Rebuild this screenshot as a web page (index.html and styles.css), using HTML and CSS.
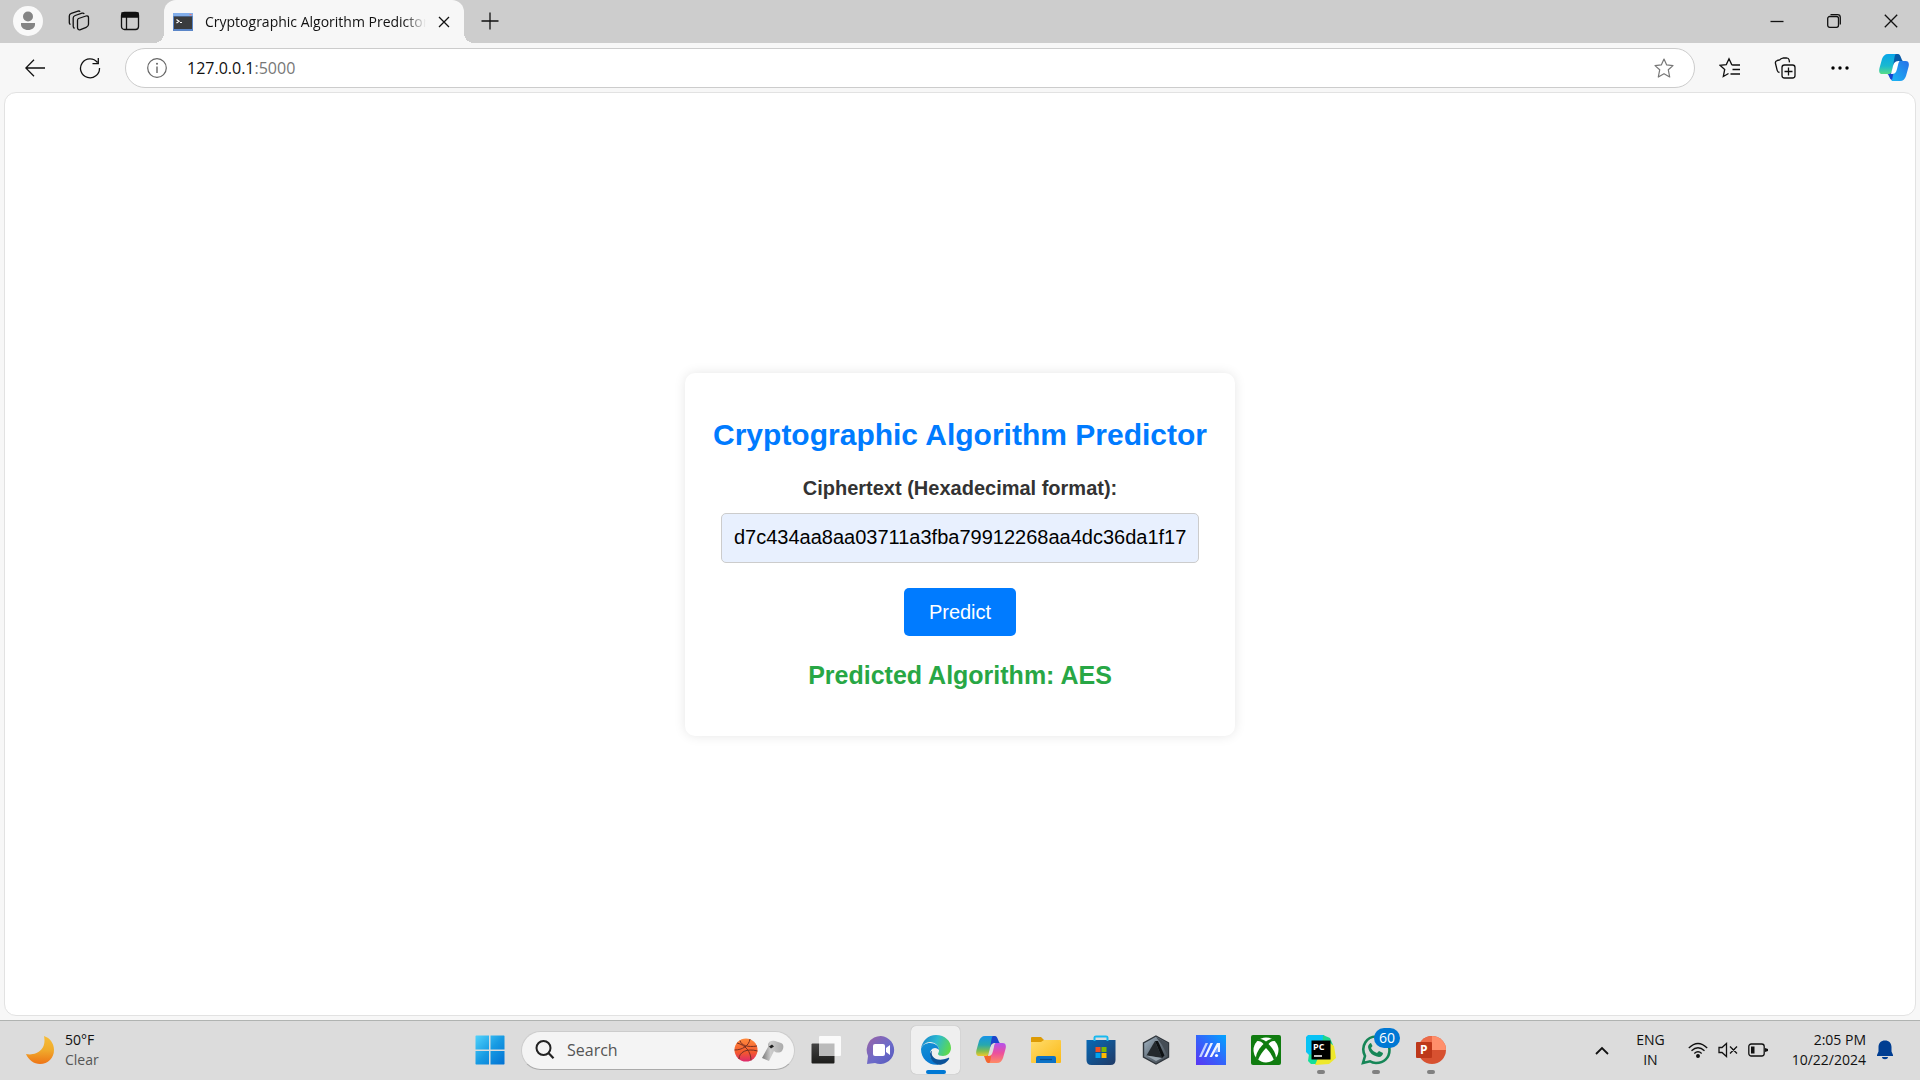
FILE: index.html
```html
<!DOCTYPE html>
<html lang="en">

<head>
    <meta charset="UTF-8">
    <meta name="viewport" content="width=device-width, initial-scale=1.0">
    <title>Cryptographic Algorithm Predictor</title>
    <link rel="stylesheet" href="styles.css">
</head>

<body>
    <header class="browser">
        <div class="tab-bar">
            <button class="icon-btn profile" aria-label="Profile">
                <svg width="30" height="30" viewBox="0 0 30 30"><circle cx="15" cy="15" r="15" fill="#f9f9f9"/><circle cx="15" cy="10.500" r="5" fill="#858585"/><path d="M8 17h14v1.500c0 3-3 5.500-7 5.500s-7-2.500-7-5.500z" fill="#858585"/></svg>
            </button>
            <button class="icon-btn" aria-label="Workspaces">
                <svg class="line" width="22" height="22" viewBox="0 0 22 22"><path d="M10.500 8.500l7.500-2.500c1.600-.5 2.500.3 2.500 1.700v6.500c0 1.500-.8 2.500-2.300 3.100l-5.700 2.300c-1.700.7-3-.2-3-2V10.500c0-1 .3-1.700 1-2z"/><path d="M6.500 18.500l-.7-.7c-.5-.5-.6-1-.6-1.700V8c0-1.400.6-2 2-2.500l6.800-2.300c1-.3 1.800 0 2.200.8"/><path d="M2.500 14.500L1.800 14c-.4-.5-.5-.9-.5-1.500V6c0-1.400.6-2.200 2-2.700L10 1.100c1-.3 1.700 0 2.100.7"/></svg>
            </button>
            <button class="icon-btn" aria-label="Tab actions">
                <svg class="line" width="20" height="20" viewBox="0 0 20 20"><rect x="1.500" y="1.500" width="17" height="17" rx="3"/><path d="M2 2h16v4H2z" fill="#111"/><path d="M6.500 6v12"/></svg>
            </button>
            <div class="tab">
                <svg width="20" height="18" viewBox="0 0 20 18"><path d="M0 0h20v18H0z" fill="#5b86c8"/><path d="M0 0h20v3H0z" fill="#82aeea"/><path d="M1 3.500h18V16H1z" fill="#3a3c3e"/><path d="M16.500 1h2v1.200h-2z" fill="#e77"/><path d="M3.500 6.500L6 8.300l-2.500 1.800M7 9.500h2" fill="none" stroke="#fff" stroke-width="1.200"/></svg>
                <span class="tab-title">Cryptographic Algorithm Predictor</span>
                <button class="tab-close" aria-label="Close tab">
                    <svg class="line" width="12" height="12" viewBox="0 0 12 12"><path d="M1 1l10 10M11 1L1 11"/></svg>
                </button>
            </div>
            <button class="icon-btn new-tab" aria-label="New tab">
                <svg class="line" width="18" height="18" viewBox="0 0 18 18"><path d="M9 .5v17M.5 9h17"/></svg>
            </button>
            <div class="window-btns">
                <button class="window-btn" aria-label="Minimize"><svg class="line" width="14" height="14" viewBox="0 0 14 14"><path d="M.5 7.500h13"/></svg></button>
                <button class="window-btn" aria-label="Restore"><svg class="line" width="14" height="14" viewBox="0 0 14 14"><rect x=".7" y="2.500" width="10.800" height="10.800" rx="2"/><path d="M3.500.7h7c1.800 0 2.800 1 2.800 2.800v7"/></svg></button>
                <button class="window-btn" aria-label="Close"><svg class="line" width="14" height="14" viewBox="0 0 14 14"><path d="M.8.8l12.400 12.400M13.200.8L.8 13.200"/></svg></button>
            </div>
        </div>
        <div class="toolbar">
            <button class="tool-btn" aria-label="Back"><svg class="line" width="20" height="18" viewBox="0 0 20 18"><path d="M9 .8L.8 9 9 17.200M1 9h19"/></svg></button>
            <button class="tool-btn" aria-label="Refresh"><svg class="line" width="22" height="22" viewBox="0 0 22 22"><path d="M18.500 5.500A9.500 9.500 0 1 0 20.500 11M19.300 1v5.700h-5.800"/></svg></button>
            <div class="address">
                <svg width="20" height="20" viewBox="0 0 20 20"><circle cx="10" cy="10" r="9.300" fill="none" stroke="#666" stroke-width="1.200"/><path d="M10 8.500V15" stroke="#666" stroke-width="1.400"/><circle cx="10" cy="5.800" r="1" fill="#666"/></svg>
                <a class="url" href="#">127.0.0.1<span class="port">:5000</span></a>
                <button class="star" aria-label="Add to favorites"><svg width="20" height="20" viewBox="0 0 20 20"><path d="M10 1l2.700 5.900 6.300.7-4.700 4.200 1.400 7.200-5.700-3.300L4.300 19l1.400-7.200L1 7.600l6.300-.7z" fill="none" stroke="#777" stroke-width="1.200" stroke-linejoin="round"/></svg></button>
            </div>
            <div class="tools">
                <button class="tool-btn" aria-label="Favorites"><svg class="line" width="22" height="22" viewBox="0 0 22 22"><path d="M14.300 7.800l-1.600-.2L10 1.700 7.300 7.600 1 8.300 5.700 12.500 4.300 19.500l5.200-3M13 8h8M13.500 12.500H21M11.500 17H21"/></svg></button>
                <button class="tool-btn" aria-label="Collections"><svg class="line" width="22" height="22" viewBox="0 0 22 22"><rect x="8" y="8" width="13" height="13" rx="2.500"/><path d="M14.500 10.500v8M10.500 14.500h8M5.500 15.500c-1.500-.3-2-1-2.300-2.200L1.500 6.500C1.100 5 1.700 4 3.200 3.500l2.500-.6C7 1.200 8 1.300 9.500 1l3-.2c1.500 0 2.300.6 2.600 2l.4 2.500"/></svg></button>
                <button class="tool-btn" aria-label="Settings and more"><svg width="18" height="6" viewBox="0 0 18 6"><circle cx="2" cy="3" r="1.700"/><circle cx="9" cy="3" r="1.700"/><circle cx="16" cy="3" r="1.700"/></svg></button>
                <button class="tool-btn copilot" aria-label="Copilot">
                    <svg width="30" height="28" viewBox="0 0 30 28">
                        <defs>
                            <linearGradient id="cp1" x1="0" y1="0" x2="0" y2="1"><stop offset="0" stop-color="#08a5e9"/><stop offset=".6" stop-color="#1ab9cf"/><stop offset="1" stop-color="#59dd87"/></linearGradient>
                            <linearGradient id="cp2" x1="1" y1="0" x2="0" y2="1"><stop offset="0" stop-color="#2870e8"/><stop offset="1" stop-color="#19b7f4"/></linearGradient>
                        </defs>
                        <path d="M13 21L16 8l8-1c-2-1-2-7-5-7h-8l-3 20z" fill="#075aa8"/>
                        <path d="M8 19c2 1 2 6 5 7h7l3-19-7 1-3 11z" fill="#1745d2"/>
                        <path d="M17 0H9C6 0 4 2 3 5L.5 14c-1 4 0 6 3 6H10c2 0 3-2 3.500-4L15 6c.7-4 1-6 2-6z" fill="url(#cp1)"/>
                        <path d="M12 27h9c3 0 5-2 6-5l2.500-9c1-4 0-6-3-6H20c-2 0-3 2-3.500 4L14 21c-.7 4-1 6-2 6z" fill="url(#cp2)"/>
                        <path d="M21 7c-4 0-6 1-7 5l-2 8c4 0 5-1 6-5l1-4c.5-2 1-4 2-4z" fill="#fff"/>
                    </svg>
                </button>
            </div>
        </div>
    </header>

    <main class="page">
        <div class="container">
            <h1>Cryptographic Algorithm Predictor</h1>
            <form>
                <label for="ciphertext">Ciphertext (Hexadecimal format):</label>
                <input type="text" id="ciphertext" name="ciphertext" value="d7c434aa8aa03711a3fba79912268aa4dc36da1f17">
                <button class="predict" type="button">Predict</button>
            </form>
            <h2>Predicted Algorithm: AES</h2>
        </div>
    </main>

    <footer class="taskbar">
        <div class="weather">
            <svg width="30" height="30" viewBox="0 0 30 30"><defs><linearGradient id="moon" x1="0" y1="0" x2="0" y2="1"><stop offset="0" stop-color="#f6bd37"/><stop offset=".5" stop-color="#f0ab2c"/><stop offset="1" stop-color="#ee7416"/></linearGradient></defs><path d="M19 1c6 2 10 7.500 10 14 0 8-6 14-14 14C9 29 3.500 25 1 19c10 2 21-4 18-18z" fill="url(#moon)"/></svg>
            <div class="two-line">
                <span>50°F</span>
                <span class="muted">Clear</span>
            </div>
        </div>

        <div class="apps">
            <button class="app" aria-label="Start">
                <svg width="30" height="30" viewBox="0 0 30 30"><defs><linearGradient id="win" x1="0" y1="0" x2="1" y2="1"><stop offset="0" stop-color="#51d2fb"/><stop offset=".5" stop-color="#179be3"/><stop offset="1" stop-color="#0271d3"/></linearGradient></defs><path d="M1 .5h13v14H.5V1zM15.500.500H29l.5.5v13.500h-14zM.5 16H14v13.500H1l-.5-.5zM15.500 16h14v13l-.5.5H15.500z" fill="url(#win)"/></svg>
            </button>
            <div class="search">
                <svg width="20" height="20" viewBox="0 0 20 20"><circle cx="8.500" cy="8" r="7" fill="none" stroke="#222" stroke-width="2"/><path d="M13.500 13l5 5.200" stroke="#222" stroke-width="2.200"/></svg>
                <input type="text" aria-label="Search" placeholder="Search">
                <svg width="50" height="26" viewBox="0 0 50 26">
                    <defs>
                        <linearGradient id="ball" x1="0" y1="0" x2="0" y2="1"><stop offset="0" stop-color="#ff8b3d"/><stop offset=".6" stop-color="#f4592e"/><stop offset="1" stop-color="#dd2a6c"/></linearGradient>
                        <linearGradient id="whistle" x1="0" y1="0" x2="1" y2="0"><stop offset="0" stop-color="#777"/><stop offset=".4" stop-color="#ccc"/><stop offset="1" stop-color="#aaa"/></linearGradient>
                    </defs>
                    <circle cx="12" cy="13" r="11.500" fill="url(#ball)"/>
                    <path d="M6 3.500c1 5 8 7 17 5.500M.5 13C8 13 15 9 16 2M3 6c8 2 14 8 14 17.500M5 22C5 15 13 11 23.500 14" fill="none" stroke="#793022" stroke-width="1"/>
                    <path d="M34 7c1-3 4-4 7-3l6 2c3 1 3 5 1 8-2 2-6 2-8 0l-5 10-7-3 6-11z" fill="url(#whistle)"/><path d="M35 9.500l3-2 2 2-3 2z" fill="#222"/>
                </svg>
            </div>
            <button class="app" aria-label="Task view">
                <svg width="30" height="30" viewBox="0 0 30 30"><defs><linearGradient id="task" x1="0" y1="0" x2="0" y2="1"><stop offset="0" stop-color="#444"/><stop offset="1" stop-color="#1d1d1b"/></linearGradient></defs><rect x=".5" y="8.500" width="23" height="20" rx="1" fill="url(#task)"/><rect x="8" y="1" width="22" height="20" rx="1" fill="#fafafa"/><path d="M8 8.500h15.500V21H8z" fill="#bbb"/></svg>
            </button>
            <button class="app" aria-label="Chat">
                <svg width="30" height="30" viewBox="0 0 30 30"><defs><linearGradient id="chat" x1="0" y1="0" x2="1" y2="1"><stop offset="0" stop-color="#9b62a4"/><stop offset=".55" stop-color="#6d6bc9"/><stop offset="1" stop-color="#5558bd"/></linearGradient></defs><path d="M15 1a14 14 0 1 1-6 27L1 29l1-8A14 14 0 0 1 15 1z" fill="url(#chat)"/><rect x="7" y="9" width="12" height="12" rx="2" fill="#fff"/><path d="M20 13l4-3v10l-4-3z" fill="#fff"/></svg>
            </button>
            <button class="app active" aria-label="Microsoft Edge">
                <svg width="30" height="30" viewBox="0 0 30 30">
                    <defs>
                        <linearGradient id="edge1" x1="0" y1=".2" x2="1" y2=".5"><stop offset="0" stop-color="#1683cb"/><stop offset=".5" stop-color="#2cbad0"/><stop offset="1" stop-color="#5ed94e"/></linearGradient>
                        <linearGradient id="edge2" x1="0" y1="0" x2=".3" y2="1"><stop offset="0" stop-color="#1491d5"/><stop offset="1" stop-color="#0879d2"/></linearGradient>
                    </defs>
                    <path d="M0 14C1 6 7 0 15 0c9 0 15 6 15 13 0 5-4 8-8 8-3 0-5-1-5-2 0-1 1-1 1-4 0-4-4-8-9-8-4 0-8 3-9 7z" fill="url(#edge1)"/>
                    <path d="M0 14c1-4 5-6 9-6 5 0 9 3 9 7-1-1-2-2-4-2-3 0-5 3-5 6 0 5 4 9 9 10.500C9 31 0 25 0 14z" fill="url(#edge2)"/>
                    <path d="M11 16c-2 5 4 12 16 7 1-.5 1.500 0 1 1-2 3.500-6 6-10 5.800C13 29 9 25 9 19c0-1 1-3 2-3z" fill="#0b539a"/>
                </svg>
            </button>
            <button class="app" aria-label="Copilot">
                <svg width="30" height="28" viewBox="0 0 30 28">
                    <defs>
                        <linearGradient id="co1" x1="0" y1="0" x2="0" y2="1"><stop offset="0" stop-color="#1593e8"/><stop offset=".45" stop-color="#28a8ad"/><stop offset=".75" stop-color="#80bd51"/><stop offset="1" stop-color="#f0c82b"/></linearGradient>
                        <linearGradient id="co2" x1="0" y1="0" x2="0" y2="1"><stop offset="0" stop-color="#b353ed"/><stop offset=".5" stop-color="#ec4f9d"/><stop offset="1" stop-color="#ff8b64"/></linearGradient>
                    </defs>
                    <path d="M12 20L16 8l8-1c-2-1-2-7-5-7h-8z" fill="#1b45cc"/>
                    <path d="M7 19c2 1 2 7 5 8h7l4-20-7 1-3 11z" fill="#f4662f"/>
                    <path d="M17 0H9C6 0 4 2 3 5L.5 14c-1 4 0 6 3 6H10c2 0 3-2 3.500-4L15 6c.7-4 1-6 2-6z" fill="url(#co1)"/>
                    <path d="M13 27h8c3 0 5-2 6-5l2.500-9c1-4 0-6-3-6H20c-2 0-3 2-3.500 4L15 21c-.7 4-1 6-2 6z" fill="url(#co2)"/>
                    <path d="M20 7c-4 0-5 2-6 5l-2 8c3 0 4-1 5-5l1-4c0-2 1-4 2-4z" fill="#ddd"/>
                </svg>
            </button>
            <button class="app" aria-label="File Explorer">
                <svg width="30" height="28" viewBox="0 0 30 28"><defs><linearGradient id="folder" x1="0" y1="0" x2="1" y2="1"><stop offset="0" stop-color="#ffdc6c"/><stop offset="1" stop-color="#fbb915"/></linearGradient></defs><path d="M0 2q0-1 1-1h9l3 3v4H0z" fill="#dd9b05"/><path d="M0 6h10l3-2h16q1 0 1 1v21q0 1-1 1H1q-1 0-1-1z" fill="url(#folder)"/><path d="M5 27v-5q0-2 2-2h16q2 0 2 2v5z" fill="#0c72c6"/><path d="M9 23.500h12" stroke="#074d8d" stroke-width="1.200"/></svg>
            </button>
            <button class="app" aria-label="Microsoft Store">
                <svg width="30" height="30" viewBox="0 0 30 30"><defs><linearGradient id="store" x1="0" y1="0" x2="1" y2="1"><stop offset="0" stop-color="#0869b5"/><stop offset="1" stop-color="#203a66"/></linearGradient></defs><path d="M.5 5h29v20q0 5-5 5h-19q-5 0-5-5z" fill="url(#store)"/><path d="M8.500 6V2.500Q8.500 1.500 10 1.500h10q1.500 0 1.500 1V6" fill="none" stroke="#19b9ef" stroke-width="2"/><path d="M9.500 12h5v5h-5z" fill="#f25022"/><path d="M15.500 12h5v5h-5z" fill="#7fba00"/><path d="M9.500 18h5v5h-5z" fill="#00a4ef"/><path d="M15.500 18h5v5h-5z" fill="#ffb900"/></svg>
            </button>
            <button class="app" aria-label="Armoury Crate">
                <svg width="28" height="30" viewBox="0 0 28 30">
                    <defs><linearGradient id="crate" x1="0" y1="0" x2="1" y2="1"><stop offset="0" stop-color="#a9bccb"/><stop offset=".5" stop-color="#66727d"/><stop offset="1" stop-color="#3f464d"/></linearGradient></defs>
                    <path d="M14 1l12.500 7v14L14 29 1.500 22V8z" fill="url(#crate)" stroke="#30363c" stroke-width="1.400"/>
                    <path d="M14 2l12 6.500v13L20 10z" fill="#454d55"/>
                    <path d="M13 6L4.500 20.500 20 23z" fill="#24292d"/>
                    <path d="M13 6l7 17 2.500-2.500L16 6z" fill="#0e1113"/>
                    <path d="M4.500 20.500L20 23l-6 3z" fill="#97a3ad"/>
                </svg>
            </button>
            <button class="app" aria-label="MyASUS">
                <svg width="30" height="30" viewBox="0 0 30 30"><defs><linearGradient id="asus" x1="0" y1="1" x2="1" y2="0"><stop offset="0" stop-color="#5a35f3"/><stop offset=".5" stop-color="#3265fb"/><stop offset="1" stop-color="#01a5ff"/></linearGradient></defs><path d="M0 0h30v30H0z" fill="url(#asus)"/><path d="M3 22L9.500 8H12L5.500 22z" fill="#c4d3ff"/><path d="M8 22l6.500-14H17l-6.500 14z" fill="#eef3ff"/><path d="M13.500 22L21 8h3v9h-2.300v-5L16 22z" fill="#f0f5ff"/><path d="M18.500 17.500h3.200V12z" fill="#7fa9ff"/><circle cx="20.500" cy="20.500" r="1.600" fill="#fff"/></svg>
            </button>
            <button class="app" aria-label="Xbox">
                <svg width="30" height="30" viewBox="0 0 30 30"><rect width="30" height="30" rx="2" fill="#107c10"/><circle cx="15" cy="15" r="12.500" fill="#fff"/><path d="M5 5c4-2 7-1 10 1.500C18 4 21 3 25 5l-2 1c-2 0-4 1-5.500 3 4 4 7.500 9 7.500 14l-2 2c-2-5-5-9-8-12-3 3-6 7-8 12l-2-2c0-5 3.500-10 7.500-14C11 7 9 6 7 6z" fill="#107c10"/></svg>
            </button>
            <button class="app running" aria-label="PyCharm">
                <svg width="30" height="30" viewBox="0 0 30 30"><path d="M0 2l2-2h16l3 8-8 18-8-4-5-5z" fill="#08c3f5"/><path d="M17 0l7 3 3 7-3 6-8-3z" fill="#20d58d"/><path d="M3 19l9 2 8-10-1 18H5l-3-3z" fill="#13df9a"/><path d="M24 8l4 3 2 12-7 6-14 1 3-7z" fill="#eee82c"/><path d="M5.500 5.500h19v19h-19z"/><path d="M8 21h8" stroke="#fff" stroke-width="1.500"/><text class="pc" x="7" y="15">PC</text></svg>
            </button>
            <button class="app running" aria-label="WhatsApp">
                <svg width="30" height="30" viewBox="0 0 30 30"><path d="M2 28l2-7C-1 11 6 1.500 15 1.500c8 0 13.500 6 13.500 13.500S23 28 15 28c-3 0-5-1-6-1.700z" fill="none" stroke="#168657" stroke-width="2.600"/><path d="M10 8c-1 0-3 2-3 4 1 6 5 9 11 10 2 0 4-2 4-4l-4-2-2 2c-3-1-5-3-6-5l1.500-2z" fill="#168657"/></svg>
                <span class="badge">60</span>
            </button>
            <button class="app running" aria-label="PowerPoint">
                <svg width="30" height="30" viewBox="0 0 30 30"><circle cx="16" cy="15" r="14" fill="#d75130"/><path d="M16 1a14 14 0 0 1 14 14H16z" fill="#ff8f6b"/><path d="M16 1A14 14 0 0 0 2 15h14z" fill="#ec6b49"/><rect x="0" y="7" width="16" height="16" rx="1" fill="#bd3719"/><text class="ppt" x="4" y="19">P</text></svg>
            </button>
        </div>

        <div class="tray">
            <button class="tray-btn chevron" aria-label="Show hidden icons"><svg class="line bold" width="14" height="9" viewBox="0 0 14 9"><path d="M1 8l6-6 6 6"/></svg></button>
            <div class="two-line centered">
                <span>ENG</span>
                <span>IN</span>
            </div>
            <button class="tray-btn status" aria-label="Network, volume and battery">
                <svg class="line" width="20" height="16" viewBox="0 0 20 16"><path d="M.8 6Q10-3 19.200 6M3.500 8.700q6.500-6 13 0M6.300 11.400q3.700-3.300 7.400 0"/><circle cx="10" cy="14" r="1.300" fill="#111"/></svg>
                <svg class="line" width="20" height="16" viewBox="0 0 20 16"><path d="M1 5.500h3L8.500 1.500v13L4 10.500H1zM12 4.500l7 7M19 4.500l-7 7"/></svg>
                <svg class="line" width="20" height="14" viewBox="0 0 20 14"><rect x=".8" y="1" width="15.400" height="12" rx="2.500"/><path d="M3 3.500h3.500v7H3z" fill="#111" stroke="none"/><path d="M17 5l3 1v2l-3 1z" fill="#111" stroke="none"/></svg>
            </button>
            <div class="two-line clock">
                <span>2:05 PM</span>
                <span>10/22/2024</span>
            </div>
            <button class="tray-btn" aria-label="Notifications"><svg width="16" height="20" viewBox="0 0 16 20"><path d="M8 .5c4 0 6.500 2.700 6.500 6.500v4.500L16 15v1H0v-1l1.500-3.500V7C1.500 3.200 4 .5 8 .5zM5 17h6c0 3-6 3-6 0z" fill="#003e92"/></svg></button>
        </div>
    </footer>
</body>

</html>
```

FILE: styles.css
```css
* {
    box-sizing: border-box;
}

body {
    display: flex;
    flex-direction: column;
    height: 100vh;
    margin: 0;
    background-color: #f7f7f7;
    color: #111;
    font-family: "Open Sans", sans-serif;
    font-size: 14px;
}

button {
    display: flex;
    align-items: center;
    justify-content: center;
    padding: 0;
    border: 0;
    background: none;
    cursor: pointer;
}

svg {
    display: block;
    flex-shrink: 0;
}

.line {
    fill: none;
    stroke: #111;
    stroke-width: 1.3;
}

.line.bold {
    stroke-width: 1.8;
}

/* tab bar */
.tab-bar {
    display: flex;
    height: 43px;
    padding-left: 2px;
    background-color: #cdcdcd;
}

.icon-btn {
    width: 51px;
    height: 42px;
}

.tab {
    position: relative;
    display: flex;
    align-items: center;
    gap: 12px;
    width: 300px;
    margin-left: 9px;
    padding: 0 14px 0 9px;
    border-radius: 12px 12px 0 0;
    background-color: #f7f7f7;
}

.tab::before,
.tab::after {
    content: "";
    position: absolute;
    bottom: 0;
    width: 10px;
    height: 10px;
}

.tab::before {
    left: -10px;
    background: radial-gradient(circle at 0 0, #cdcdcd 10px, #f7f7f7 10px);
}

.tab::after {
    right: -10px;
    background: radial-gradient(circle at 100% 0, #cdcdcd 10px, #f7f7f7 10px);
}

.tab-title {
    flex: 1;
    overflow: hidden;
    line-height: 20px;
    white-space: nowrap;
    mask-image: linear-gradient(to right, #000 90%, transparent);
}

.tab-close {
    width: 12px;
    height: 20px;
}

.window-btns {
    display: flex;
    margin-left: auto;
    padding-right: 1px;
}

.window-btn {
    width: 57px;
    height: 42px;
}

/* toolbar */
.toolbar {
    display: flex;
    align-items: center;
    height: 49px;
    padding-left: 7px;
}

.tool-btn {
    width: 55px;
    height: 40px;
}

.address {
    display: flex;
    flex: 1;
    align-items: center;
    gap: 20px;
    height: 40px;
    margin-left: 8px;
    padding: 0 20px 0 21px;
    border: 1px solid #ccc;
    border-radius: 20px;
    background-color: #fff;
}

.url {
    flex: 1;
    color: #111;
    font-size: 16px;
    text-decoration: none;
}

.port {
    color: #777;
}

.tools {
    display: flex;
    margin-left: 7px;
}

.copilot {
    width: 53px;
}

/* page */
.page {
    display: flex;
    flex: 1;
    align-items: center;
    justify-content: center;
    margin: 0 4px 4px;
    border: 1px solid #e2e2e2;
    border-radius: 12px;
    background-color: #fff;
    font-family: Arial, "Liberation Sans", sans-serif;
}

.container {
    width: 550px;
    padding: 25px;
    border-radius: 10px;
    background-color: #fff;
    box-shadow: 0 0 12px rgba(0, 0, 0, 0.1);
    text-align: center;
}

h1 {
    margin: 20px 0 25px;
    color: #007bff;
    font-size: 30px;
    line-height: 34px;
    white-space: nowrap;
}

form {
    display: flex;
    flex-direction: column;
    align-items: center;
}

label {
    margin-bottom: 13px;
    color: #333;
    font-size: 20px;
    font-weight: bold;
    line-height: 23px;
}

#ciphertext {
    width: calc(100% - 22px);
    height: 50px;
    margin-bottom: 25px;
    padding: 12px;
    border: 1px solid #ccc;
    border-radius: 5px;
    background-color: #e8f0fe;
    font-family: inherit;
    font-size: 20px;
}

.predict {
    padding: 12px 25px;
    border-radius: 5px;
    background-color: #007bff;
    color: #fff;
    font-family: inherit;
    font-size: 20px;
    line-height: 24px;
}

h2 {
    margin: 25px 0 22px;
    color: #28a745;
    font-size: 25px;
    line-height: 28px;
}

/* taskbar */
.taskbar {
    display: grid;
    grid-template-columns: 1fr auto 1fr;
    align-items: center;
    height: 60px;
    padding-bottom: 1px;
    border-top: 1px solid #b0b3b1;
    background-color: #dcdcdc;
}

.weather {
    display: flex;
    align-items: center;
    gap: 10px;
    padding-left: 25px;
}

.two-line {
    display: flex;
    flex-direction: column;
    line-height: 20px;
}

.muted {
    color: #555;
}

.apps {
    display: flex;
    align-items: center;
}

.app {
    position: relative;
    width: 49px;
    height: 48px;
    margin: 0 3px;
    border-radius: 5px;
}

.active {
    background-color: #efefef;
    box-shadow: 0 0 1px #999;
}

.active::after,
.running::after {
    content: "";
    position: absolute;
    bottom: 0;
    width: 8px;
    height: 4px;
    border-radius: 2px;
    background-color: #808080;
}

.active::after {
    width: 20px;
    background-color: #0078d4;
}

.search {
    display: flex;
    align-items: center;
    gap: 12px;
    width: 274px;
    height: 39px;
    margin: 0 3px 0 4px;
    padding: 0 10px 0 13px;
    border: 1px solid #ccc;
    border-bottom-color: #aaa;
    border-radius: 20px;
    background-color: #f4f4f4;
}

.search input {
    flex: 1;
    min-width: 0;
    padding: 0;
    border: 0;
    background: none;
    font-family: inherit;
    font-size: 16px;
}

.search input::placeholder {
    color: #555;
}

/* the count sits over the corner of the icon */
.badge {
    position: absolute;
    top: 2px;
    right: 0;
    padding: 0 5px;
    border-radius: 10px;
    background-color: #0078d4;
    color: #fff;
    font-family: "Open Sans", sans-serif;
    font-size: 14px;
    line-height: 20px;
}

.pc,
.ppt {
    fill: #fff;
    font-family: "Open Sans", sans-serif;
    font-size: 9px;
    font-weight: bold;
}

.ppt {
    font-size: 12px;
}

.tray {
    display: flex;
    align-items: center;
    justify-content: flex-end;
    padding-right: 27px;
}

.tray-btn {
    height: 40px;
}

.chevron {
    margin-right: 27px;
}

.centered {
    align-items: center;
}

.status {
    gap: 10px;
    margin: 0 24px 0 23px;
}

.clock {
    align-items: flex-end;
    margin-right: 11px;
}
```
